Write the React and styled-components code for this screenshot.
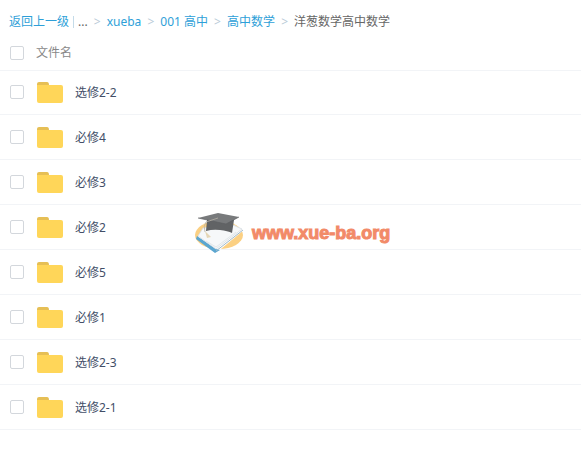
import React from 'react';
import styled, { createGlobalStyle } from 'styled-components';

const GlobalStyle = createGlobalStyle`
  body {
    margin: 0;
    background: #fff;
    color: #424e67;
    font: 12px/16px 'Noto Sans', 'Noto Sans CJK SC', sans-serif;
  }
`;

const Page = styled.main`
  position: relative;
`;

const Breadcrumb = styled.nav`
  display: flex;
  align-items: center;
  padding: 14px 9px 0;
  color: #666;
  white-space: nowrap;
`;

const Crumb = styled.a`
  color: #2e9fd8;
  text-decoration: none;

  &:hover {
    text-decoration: underline;
  }
`;

const Divider = styled.span`
  width: 1px;
  height: 12px;
  margin: 0 4px;
  background: #c4dbe9;
`;

const Arrow = styled.span`
  width: 19px;
  text-align: center;
  color: #b9cbd8;
`;

const Header = styled.div`
  display: flex;
  align-items: center;
  height: 34px;
  padding: 6px 10px 0;
  color: #888;
`;

const Checkbox = styled.input`
  appearance: none;
  box-sizing: border-box;
  flex: none;
  width: 14px;
  height: 14px;
  margin: 0;
  border: 1px solid #d3d7dc;
  border-radius: 2px;
  background: #fff;

  &:checked {
    background: #2e9fd8;
  }
`;

const HeaderLabel = styled.label`
  margin-left: 12px;
`;

const List = styled.ul`
  margin: 0;
  padding: 0;
  list-style: none;
  border-top: 1px solid #f2f4f7;
`;

const Row = styled.li`
  display: flex;
  align-items: center;
  box-sizing: border-box;
  height: 45px;
  padding: 0 10px;
  border-bottom: 1px solid #f2f4f7;

  &:first-child {
    height: 44px;
    padding-bottom: 1px;
  }
`;

const FolderSvg = styled.svg`
  flex: none;
  margin: 1px 12px 0 13px;
`;

const RowLabel = styled.label`
  padding-top: 2px;
`;

const Watermark = styled.div`
  position: absolute;
  top: 211px;
  left: 194px;
  display: flex;
  align-items: center;
  gap: 6px;
  pointer-events: none;
`;

const WatermarkText = styled.span`
  color: #f28a68;
  font: bold 18px/28px 'Liberation Sans', Arial, sans-serif;
  -webkit-text-stroke: 1px #f28a68;
`;

const folders = ['选修2-2', '必修4', '必修3', '必修2', '必修5', '必修1', '选修2-3', '选修2-1'];
const parents = ['xueba', '001 高中', '高中数学'];

function FolderIcon() {
  return (
    <FolderSvg width="26" height="21" viewBox="0 0 26 21" aria-hidden="true">
      <path d="M0 5V2Q0 0 2 0H10Q12 0 12 3V5Z" fill="#e6bf55" />
      <path d="M0 3H24Q26 3 26 5V19Q26 21 24 21H2Q0 21 0 19Z" fill="#ffd659" />
    </FolderSvg>
  );
}

function GraduationLogo() {
  return (
    <svg width="52" height="44" viewBox="0 0 52 44" aria-hidden="true">
      <ellipse cx="25" cy="24" rx="24" ry="14" fill="#fbd083" />
      {/* book */}
      <path d="M10 17L3 27L22 42L50 19L40 14Z" fill="#fff" />
      <path d="M3 25L2 28L21 42L26 39L22 38Z" fill="#5ba6d0" />
      <path d="M22 40L49 19" fill="none" stroke="#9fb9c8" />
      <path d="M9 17L4 25L22 38L48 18L39 14Z" fill="#f6f8f9" stroke="#d5dce1" strokeWidth="0.8" />
      <path d="M12 30L22 36L42 21" fill="none" stroke="#e3e8eb" />
      {/* cap */}
      <path d="M13 9L12 20Q19 18 26 19Q34 20 38 22L40 9Z" fill="#616365" />
      <path d="M4 7L24 2L45 6L32 13Z" fill="#787a7c" />
      <path d="M4 7L32 13L45 6" fill="none" stroke="#5d5f61" strokeWidth="0.7" />
      {/* tassel */}
      <path d="M24 7L12 11Q9 15 11 21" fill="none" stroke="#b5b0a4" strokeWidth="0.8" />
      <path d="M11 20L13 27L17 26Z" fill="#e5d6b5" />
    </svg>
  );
}

function App() {
  return (
    <>
      <GlobalStyle />
      <Page>
        <Breadcrumb>
          <Crumb href="#up">返回上一级</Crumb>
          <Divider />
          <span>...</span>
          {parents.map((name) => (
            <React.Fragment key={name}>
              <Arrow>&gt;</Arrow>
              <Crumb href={`#${name}`}>{name}</Crumb>
            </React.Fragment>
          ))}
          <Arrow>&gt;</Arrow>
          <span>洋葱数学高中数学</span>
        </Breadcrumb>
        <Header>
          <Checkbox type="checkbox" id="select-all" />
          <HeaderLabel htmlFor="select-all">文件名</HeaderLabel>
        </Header>
        <List>
          {folders.map((name, i) => (
            <Row key={name}>
              <Checkbox type="checkbox" id={`folder-${i}`} />
              <FolderIcon />
              <RowLabel htmlFor={`folder-${i}`}>{name}</RowLabel>
            </Row>
          ))}
        </List>
        <Watermark>
          <GraduationLogo />
          <WatermarkText>www.xue-ba.org</WatermarkText>
        </Watermark>
      </Page>
    </>
  );
}

export default App;
